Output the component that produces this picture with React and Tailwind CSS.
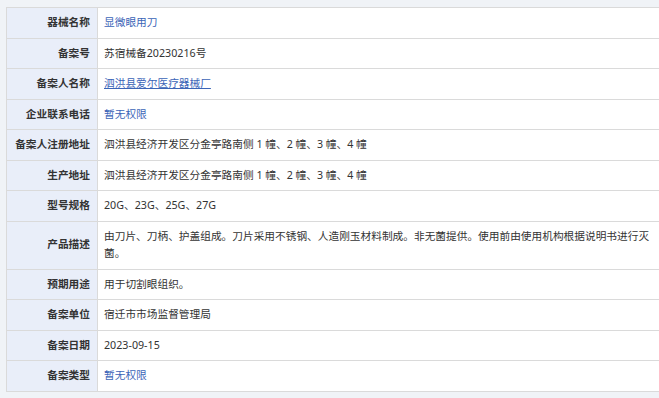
const rows = [
  { label: "器械名称", value: "显微眼用刀", link: true },
  { label: "备案号", value: "苏宿械备20230216号" },
  { label: "备案人名称", value: "泗洪县爱尔医疗器械厂", link: true, underline: true },
  { label: "企业联系电话", value: "暂无权限", link: true },
  { label: "备案人注册地址", value: "泗洪县经济开发区分金亭路南侧 1 幢、2 幢、3 幢、4 幢" },
  { label: "生产地址", value: "泗洪县经济开发区分金亭路南侧 1 幢、2 幢、3 幢、4 幢" },
  { label: "型号规格", value: "20G、23G、25G、27G" },
  {
    label: "产品描述",
    value:
      "由刀片、刀柄、护盖组成。刀片采用不锈钢、人造刚玉材料制成。非无菌提供。使用前由使用机构根据说明书进行灭菌。",
  },
  { label: "预期用途", value: "用于切割眼组织。" },
  { label: "备案单位", value: "宿迁市市场监督管理局" },
  { label: "备案日期", value: "2023-09-15" },
  { label: "备案类型", value: "暂无权限", link: true },
];

export default function App() {
  return (
    <div
      className="w-[659px] h-[398px] overflow-hidden bg-[#f0f3f7] pt-[7px] pl-[6px] text-[10.7px] leading-[17.5px] text-[#333]"
      style={{ fontFamily: '"Noto Sans", "Noto Sans CJK SC", sans-serif' }}
    >
      <table className="w-[664px] border-collapse table-fixed">
        <colgroup>
          <col className="w-[91px]" />
          <col />
        </colgroup>
        <tbody>
          {rows.map((r) => (
            <tr key={r.label}>
              <td className="border border-[#dadada] bg-[#e9eef9] py-[6px] pr-[7px] text-right align-middle font-bold whitespace-nowrap">
                {r.label}
              </td>
              <td className="border border-[#dadada] bg-white py-[6px] pl-[6px] pr-[16px] align-middle">
                {r.link ? (
                  <a className={"text-[#3b64b7] " + (r.underline ? "underline" : "")}>{r.value}</a>
                ) : (
                  r.value
                )}
              </td>
            </tr>
          ))}
        </tbody>
      </table>
    </div>
  );
}
